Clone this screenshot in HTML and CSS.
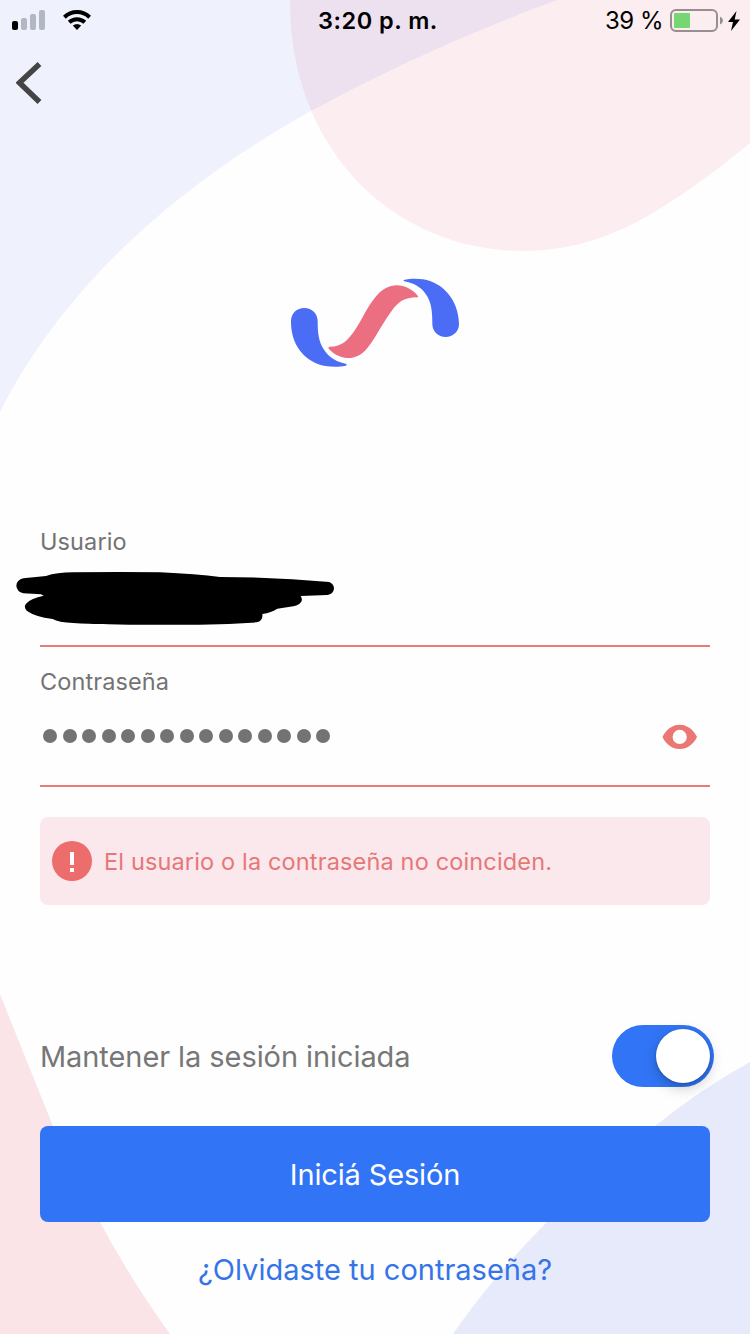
FILE: index.html
```html
<!DOCTYPE html>
<html lang="es">
<head>
<meta charset="utf-8">
<title>Iniciá Sesión</title>
<link rel="stylesheet" href="styles.css">
</head>
<body>
<div class="screen">
  <svg class="backdrop" viewBox="0 0 750 1334" aria-hidden="true">
    <path fill="#eff1fd" d="M0 0H557Q426 48 309 112C184 182 67 280 0 412Z"/>
    <path fill="#e4677e" fill-opacity=".11" d="M290 0C289 150 394 251 523 251C560 251 596 242 631 225C675 202 712 174 750 143V0Z"/>
    <path fill="#fae4e7" d="M0 994Q27 1062 53 1126Q75 1177 100 1222Q129 1277 170 1334H0Z"/>
    <path fill="#e7eafb" d="M750 1062Q701 1089 655 1126Q598 1170 547 1222Q494 1275 453 1334H750Z"/>
  </svg>

  <header class="status">
    <div class="status-left">
      <svg class="signal" width="34" height="20" viewBox="0 0 34 20"><rect y="11" width="6" height="9" rx="2"/><g fill="#b3b7c2"><rect x="9" y="8" width="6" height="12" rx="2"/><rect x="18" y="4" width="6" height="16" rx="2"/><rect x="27" width="6" height="20" rx="2"/></g></svg>
      <svg class="wifi" width="28" height="20" viewBox="0 0 28 20"><g fill="none" stroke="#000" stroke-width="4"><path d="M1.400 7.200C8.400.400 19.600.400 26.600 7.200"/><path d="M6.200 12.200C10.600 8.100 17.400 8.100 21.800 12.200"/></g><path d="M9.800 15.600Q14 12.400 18.200 15.600L14 20Z"/></svg>
    </div>
    <div class="clock">3:20 p. m.</div>
    <div class="status-right">
      <span class="percent">39 %</span>
      <svg class="battery" width="53" height="23" viewBox="0 0 53 23"><rect x="1" y="1" width="46" height="21" rx="5" fill="none" stroke="#968e91" stroke-width="2"/><rect x="4" y="4" width="16" height="15" rx="1" fill="#76d672"/><path d="M50 7.500Q53 9 53 11.500T50 15.500Z" fill="#968e91"/></svg>
      <svg class="bolt" width="12" height="20" viewBox="0 0 12 20"><path d="M8.500 0L0 11H5L3 20L12 8.500H6.700Z"/></svg>
    </div>
  </header>

  <nav class="nav"><svg width="26" height="42" viewBox="0 0 26 42"><path d="M23.500 2L3.500 20.700L23.500 40" fill="none" stroke="#444" stroke-width="5.500"/></svg></nav>

  <div class="brand">
    <svg width="190" height="115" viewBox="0 0 570 345">
      <g fill="#4b6df6">
        <path d="M33 168C33 145 51 129 73 129C96 129 113 146 113 169C113 202 116 230 131 253C148 279 170 291 199 297C202 299 200 301 197 302C172 307 136 306 113 297C60 275 32 226 33 168Z"/>
        <path d="M371 45C393 40 428 40 450 48C509 69 537 126 537 178C537 200 519 216 497 216C474 216 457 199 457 177C457 142 455 111 437 87C422 65 400 54 373 49Q370 47 371 45Z"/>
      </g>
      <path fill="#eb6f80" d="M147 245C186 246 203 226 223 198C246 165 260 128 286 97C313 60 352 52 384 69Q407 81 415 95Q413 98 405 97C371 99 356 111 337 135C310 170 293 208 269 240C248 270 226 281 198 279Q169 275 149 254Q143 247 147 245Z"/>
    </svg>
  </div>

  <main class="form">
    <section class="field">
      <div class="label">Usuario</div>
      <svg class="scribble" width="350" height="80" viewBox="0 0 1050 240"><path d="M70 55L138 48Q170 37 220 37Q370 35 480 37Q590 42 660 51Q830 51 988 66Q1002 72 1002 86Q1000 102 982 105L902 108Q907 115 905 123Q900 135 880 139L832 146Q815 158 787 162Q790 183 770 187C700 192 620 194 540 194C420 195 290 194 220 189Q175 188 158 177Q105 170 80 152Q70 140 78 131Q93 114 131 107L123 103L70 100Q50 94 49 77Q50 60 70 55Z"/></svg>
    </section>
    <section class="field password">
      <div class="label">Contraseña</div>
      <div class="secret">
        <div class="dots"><i></i><i></i><i></i><i></i><i></i><i></i><i></i><i></i><i></i><i></i><i></i><i></i><i></i><i></i><i></i></div>
        <svg class="eye" width="36" height="26" viewBox="0 0 36 26"><path fill="#eb7773" fill-rule="evenodd" d="M.5 13C4 5.500 10.500.800 17.700.800S31.500 5.500 35 13C31.500 20.500 25 25 17.700 25S4 20.500.500 13ZM17.700 5.800a7.100 7.100 0 1 0 0 14.200a7.100 7.100 0 1 0 0-14.200Z"/></svg>
      </div>
    </section>
    <div class="alert">
      <svg width="40" height="40" viewBox="0 0 40 40"><circle cx="20" cy="20" r="20" fill="#ec6d6b"/><path fill="#fff" d="M18 11H22V24H18ZM18 27H22V31H18Z"/></svg>
      <span>El usuario o la contraseña no coinciden.</span>
    </div>
    <div class="remember"><span>Mantener la sesión iniciada</span><div class="switch"><div class="knob"></div></div></div>
    <div class="submit">Iniciá Sesión</div>
    <div class="forgot">¿Olvidaste tu contraseña?</div>
  </main>
</div>
</body>
</html>
```
FILE: styles.css
```css
* { box-sizing: border-box; }
body { margin: 0; font-family: Inter, "Liberation Sans", sans-serif; background: #fefefe; }
svg { display: block; flex: none; }
.screen { position: relative; isolation: isolate; width: 750px; height: 1334px; overflow: hidden; }
.backdrop { position: absolute; inset: 0; z-index: -1; width: 750px; height: 1334px; }

.status { display: grid; grid-template-columns: 1fr auto 1fr; align-items: center; height: 40px; padding: 0 10px 0 12px; }
.status-left, .status-right { display: flex; align-items: center; }
.status-right { justify-content: flex-end; }
.signal { margin-bottom: 1px; }
.wifi { margin: 0 0 1px 17px; }
.clock { font-size: 23.5px; font-weight: 600; letter-spacing: .5px; line-height: 40px; white-space: nowrap; padding: 1px 0 0 4px; }
.percent { font-size: 24px; letter-spacing: -.5px; white-space: nowrap; margin-right: 7px; }
.battery { margin-right: 5px; }

.nav { height: 62px; padding: 22px 0 0 16px; }
.brand { display: flex; justify-content: center; margin-top: 163px; }

.form { padding: 135px 40px 0; }
.field { height: 132px; border-bottom: 2px solid #e77b78; }
.label { font-size: 23.5px; line-height: 30px; letter-spacing: .1px; padding-top: 12px; color: #737373; white-space: nowrap; }
.field.password { height: 140px; }
.scribble { margin: 3px 0 0 -40px; }
.secret { display: flex; justify-content: space-between; align-items: center; height: 40px; padding: 0 12px 0 3px; margin-top: 19px; }
.eye { margin-top: 2px; }
.password .label { padding-top: 20px; }
.dots { display: flex; gap: 5.5px; }
.dots i { width: 14px; height: 14px; border-radius: 50%; background: #737373; }

.alert { display: flex; align-items: center; gap: 12px; height: 88px; margin-top: 30px; padding: 0 12px; border-radius: 8px; background: #fae8ec; color: #e77777; font-size: 23.5px; letter-spacing: .15px; white-space: nowrap; }
.remember { display: flex; align-items: center; justify-content: space-between; height: 62px; margin: 120px -4px 0 0; color: #777; font-size: 29px; letter-spacing: -.08px; white-space: nowrap; }
.switch { display: flex; align-items: center; justify-content: flex-end; width: 102px; height: 62px; padding-right: 4px; border-radius: 31px; background: #3175f6; }
.knob { width: 54px; height: 54px; border-radius: 50%; background: #fff; box-shadow: 0 5px 14px rgba(0, 0, 0, .22), 0 1px 3px rgba(0, 0, 0, .2); }
.submit { display: flex; align-items: center; justify-content: center; height: 96px; margin-top: 39px; border-radius: 8px; background: #3175f6; color: #fff; font-size: 29px; letter-spacing: -.15px; }
.forgot { display: flex; align-items: center; justify-content: center; height: 40px; margin-top: 27px; color: #3574e8; font-size: 29px; white-space: nowrap; }
```
